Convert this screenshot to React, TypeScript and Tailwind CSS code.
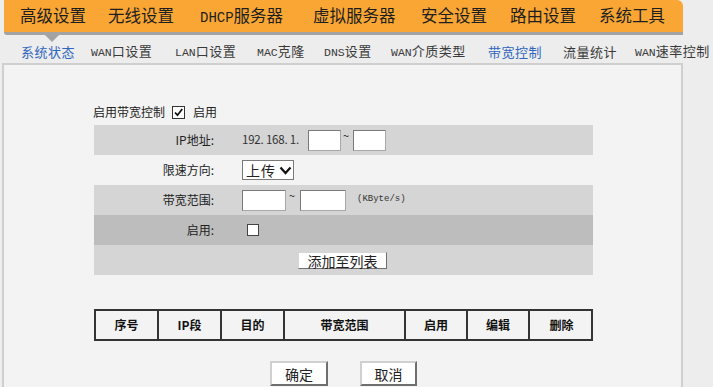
const topNav = [
  { label: "高级设置", w: "w-[88px]" },
  { label: "无线设置", w: "w-[92px]" },
  { label: "DHCP服务器", w: "w-[113px]", latin: "DHCP" },
  { label: "虚拟服务器", w: "w-[108px]" },
  { label: "安全设置", w: "w-[89px]" },
  { label: "路由设置", w: "w-[89px]" },
  { label: "系统工具", w: "w-[90px]" },
];

const subNav = [
  { latin: "", rest: "系统状态", w: "w-[70px]", active: true },
  { latin: "WAN", rest: "口设置", w: "w-[84px]" },
  { latin: "LAN", rest: "口设置", w: "w-[82px]" },
  { latin: "MAC", rest: "克隆", w: "w-[67px]" },
  { latin: "DNS", rest: "设置", w: "w-[67px]" },
  { latin: "WAN", rest: "介质类型", w: "w-[97px]" },
  { latin: "", rest: "带宽控制", w: "w-[75px]", active: true },
  { latin: "", rest: "流量统计", w: "w-[72px]" },
  { latin: "WAN", rest: "速率控制", w: "w-[90px]" },
];

const columns = [
  { label: "序号", w: "w-[63px]" },
  { label: "IP段", w: "w-[63px]" },
  { label: "目的", w: "w-[63px]" },
  { label: "带宽范围", w: "w-[121px]" },
  { label: "启用", w: "w-[62px]" },
  { label: "编辑", w: "w-[62px]" },
  { label: "删除", w: "w-[63px]" },
];

function TextBox({ width }: { width: string }) {
  return (
    <div
      className={`${width} h-[21px] shrink-0 border border-t-[#7a7a7a] border-l-[#7a7a7a] border-r-[#a8a8a8] border-b-[#a8a8a8] bg-white`}
    />
  );
}

function FormRow({
  label,
  tone,
  children,
}: {
  label: string;
  tone: string;
  children?: React.ReactNode;
}) {
  return (
    <div className={`flex h-[30px] w-[499px] items-center ${tone}`}>
      <div className="w-[124px] pr-[4px] text-right text-[12px] text-[#222]">{label}</div>
      <div className="ml-[24px] flex items-center whitespace-nowrap">{children}</div>
    </div>
  );
}

export default function App() {
  return (
    <div
      className="h-[387px] w-[713px] overflow-hidden bg-[#ededed] text-[#222]"
      style={{ fontFamily: '"Noto Sans CJK SC", "Liberation Sans", sans-serif' }}
    >
      {/* orange main menu */}
      <div className="ml-[4px] flex h-[35px] w-[679px] items-center rounded-tr-[6px] rounded-bl-[3px] border-b-[3px] border-[#a3a3a3] bg-[#f9a634] pb-[1px] pl-[16px]">
        {topNav.map((item) => (
          <div key={item.label} className={`${item.w} shrink-0 whitespace-nowrap text-[16.5px] leading-none text-[#1e1e1e]`}>
            {item.latin ? (
              <>
                <span className="font-['Liberation_Mono'] text-[14px]">{item.latin}</span>
                {item.label.slice(item.latin.length)}
              </>
            ) : (
              item.label
            )}
          </div>
        ))}
      </div>

      {/* sub menu */}
      <div className="relative flex h-[28px] items-center overflow-hidden whitespace-nowrap pl-[21px] pt-[4px]">
        <div className="absolute left-[45px] top-0 h-0 w-0 border-l-[7px] border-r-[7px] border-t-[7px] border-l-transparent border-r-transparent border-t-[#a3a3a3]" />
        {subNav.map((item, i) => (
          <div
            key={i}
            className={`${item.w} shrink-0 text-[13px] leading-none tracking-[0.5px] ${
              item.active ? "text-[#2f66bd]" : "text-[#3a3a3a]"
            }`}
          >
            {item.latin ? (
              <span className="font-['Liberation_Mono'] text-[11.5px] tracking-normal">{item.latin}</span>
            ) : null}
            {item.rest}
          </div>
        ))}
      </div>

      {/* content frame */}
      <div className="ml-[2px] h-[330px] w-[681px] border-l-2 border-r-2 border-t-2 border-[#cfcfcf] bg-[#f3f3f3] pl-[90px] pt-[37px]">
        <div className="-ml-[1px] flex h-[20px] items-center text-[12px]">
          <span>启用带宽控制</span>
          <svg className="ml-[7px]" width="13" height="13" viewBox="0 0 13 13">
            <rect x="0.5" y="0.5" width="12" height="12" fill="#fff" stroke="#333" />
            <path d="M3 6.5 L5.5 9.2 L10.2 3" fill="none" stroke="#111" strokeWidth="1.8" />
          </svg>
          <span className="ml-[8px]">启用</span>
        </div>

        <div className="mt-[3px] flex flex-col">
          <FormRow label="IP地址:" tone="bg-[#d5d5d5]">
            <span className="w-[58px] text-[11.5px] tracking-[-0.2px] text-[#333]">192. 168. 1.</span>
            <div className="ml-[8px]">
              <TextBox width="w-[33px]" />
            </div>
            <span className="mb-[10px] w-[12px] pl-[2px] text-[11px] leading-none">~</span>
            <TextBox width="w-[33px]" />
          </FormRow>

          <FormRow label="限速方向:" tone="bg-[#f3f3f3]">
            <div className="flex h-[20px] w-[52px] shrink-0 items-center whitespace-nowrap border border-[#7a7a7a] bg-white pl-[3px] text-[14px] leading-none">
              <span className="tracking-[1px]">上传</span>
              <svg className="ml-[3px] shrink-0" width="13" height="9" viewBox="0 0 13 9">
                <path d="M1.5 1.5 L6.5 7 L11.5 1.5" fill="none" stroke="#111" strokeWidth="2.2" />
              </svg>
            </div>
          </FormRow>

          <FormRow label="带宽范围:" tone="bg-[#d5d5d5]">
            <TextBox width="w-[44px]" />
            <span className="mb-[10px] w-[14px] pl-[3px] text-[11px] leading-none">~</span>
            <TextBox width="w-[46px]" />
            <span className="ml-[11px] font-['Liberation_Mono'] text-[9px] text-[#333]">(KByte/s)</span>
          </FormRow>

          <FormRow label="启用:" tone="bg-[#bdbdbd]">
            <div className="ml-[5px] h-[12px] w-[12px] border border-[#444] bg-white" />
          </FormRow>

          <div className="flex h-[30px] w-[499px] items-center bg-[#d5d5d5] pl-[204px]">
            <button
              type="button"
              className="mt-[1px] h-[17px] w-[89px] border border-b-[#6f6f6f] border-l-[#d6d6d6] border-r-[#6f6f6f] border-t-[#d6d6d6] bg-white text-[14px] leading-none text-[#222]"
            >
              添加至列表
            </button>
          </div>
        </div>

        {/* rules table */}
        <div className="mt-[34px] flex h-[32px] w-[499px] border-2 border-[#333]">
          {columns.map((col, i) => (
            <div
              key={col.label}
              className={`${col.w} flex shrink-0 items-center justify-center text-[12px] font-bold text-[#111] ${
                i < columns.length - 1 ? "border-r-2 border-[#333]" : ""
              }`}
            >
              {col.label}
            </div>
          ))}
        </div>

        <div className="mt-[20px] flex w-[499px] justify-center gap-[32px]">
          <button
            type="button"
            className="h-[25px] w-[58px] border-2 border-b-[#6f6f6f] border-l-[#d0d0d0] border-r-[#6f6f6f] border-t-[#d0d0d0] bg-white text-[14px] leading-none"
          >
            确定
          </button>
          <button
            type="button"
            className="h-[25px] w-[57px] border-2 border-b-[#6f6f6f] border-l-[#d0d0d0] border-r-[#6f6f6f] border-t-[#d0d0d0] bg-white text-[14px] leading-none"
          >
            取消
          </button>
        </div>
      </div>
    </div>
  );
}
